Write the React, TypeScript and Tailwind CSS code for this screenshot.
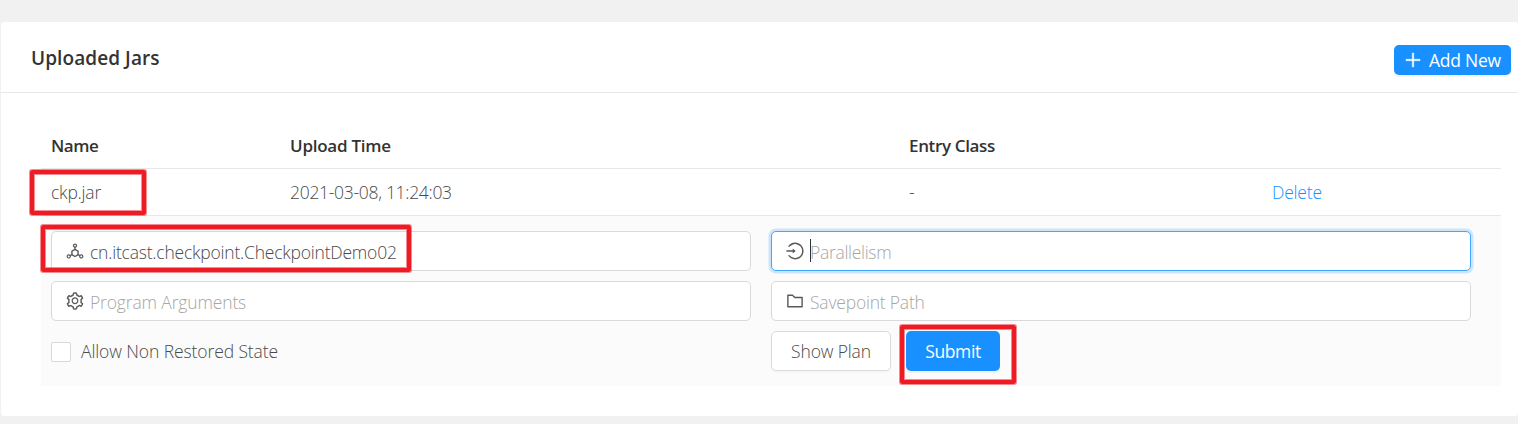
import type { ReactNode } from "react";
import {
  AiOutlineDeploymentUnit,
  AiOutlineFolder,
  AiOutlineLogin,
  AiOutlinePlus,
  AiOutlineSetting,
} from "react-icons/ai";

type FieldProps = {
  icon: ReactNode;
  children: ReactNode;
  filled?: boolean;
  focused?: boolean;
};

function Field({ icon, children, filled = false, focused = false }: FieldProps) {
  return (
    <div
      className={`flex h-10 items-center rounded-[5px] border bg-white pl-[13px] text-[17.5px] ${
        focused ? "border-[#40a9ff] shadow-[0_0_0_2.5px_rgba(24,144,255,0.2)]" : "border-[#d9d9d9]"
      }`}
    >
      <span className="mb-px w-[25px] text-[20px] text-[#595959]">{icon}</span>
      {focused && <span className="-mt-0.5 -mr-px h-[23px] w-px bg-[#333]" />}
      <span className={filled ? "mt-px text-[#4a4a4a]" : "mt-px text-[#a6a6a6]"}>{children}</span>
    </div>
  );
}

function Marker({ className }: { className: string }) {
  return (
    <div
      className={`absolute rounded-[2px] border-4 border-[#ed1c24] shadow-[0_0_0_1px_rgba(237,28,36,0.5),inset_0_0_0_1px_rgba(237,28,36,0.5)] ${className}`}
    />
  );
}

const columns = "grid grid-cols-[239px_619px_363px_239px] border-b border-[#e8e8e8] *:pl-2.5";

export default function App() {
  return (
    <div
      className="relative h-[424px] w-[1518px] overflow-hidden bg-[#f1f1f1] pt-[22px] pl-px text-[17.5px] leading-[26px] font-light text-[#4a4a4a]"
      style={{ fontFamily: '"Open Sans", "Noto Sans", sans-serif' }}
    >
      <main className="h-[394px] rounded-[3px] bg-white">
        <header className="flex h-[71px] items-center justify-between border-b border-[#e8e8e8] pr-[7px] pl-[30px]">
          <h1 className="mt-px text-[19px] font-semibold tracking-[0.08px] text-[#333]">Uploaded Jars</h1>
          <button className="mt-[5px] flex h-[30px] w-[117px] items-center rounded-[5px] bg-[#1890ff] pl-[9px] font-normal text-white shadow-[0_2px_0_rgba(0,0,0,0.045)]">
            <AiOutlinePlus className="mr-[6px] size-5 stroke-[20]" />
            <span className="whitespace-nowrap tracking-[-0.25px]">Add New</span>
          </button>
        </header>

        <section className="pt-[30px] pr-[17px] pl-10">
          <div className={`${columns} h-[46px] items-center text-[17px] font-semibold text-[#333]`}>
            <span className="tracking-[-0.5px]">Name</span>
            <span className="tracking-[-0.25px]">Upload Time</span>
            <span className="tracking-[-0.35px]">Entry Class</span>
          </div>
          <div className={`${columns} h-[47px] items-center`}>
            <span className="tracking-[-0.2px]">ckp.jar</span>
            <span className="tracking-[-0.3px]">2021-03-08, 11:24:03</span>
            <span>-</span>
            <a className="tracking-[-0.2px] text-[#1890ff]">Delete</a>
          </div>

          <div className="grid h-[170px] grid-cols-[700px_700px] content-start gap-x-5 gap-y-2.5 bg-[#fbfbfb] px-2.5 pt-[15px]">
            <Field icon={<AiOutlineDeploymentUnit />} filled>
              <span className="tracking-[-0.21px]">cn.itcast.checkpoint.CheckpointDemo02</span>
            </Field>
            <Field icon={<AiOutlineLogin />} focused>
              <span className="tracking-[-0.3px]">Parallelism</span>
            </Field>
            <Field icon={<AiOutlineSetting />}>
              <span className="tracking-[-0.15px]">Program Arguments</span>
            </Field>
            <Field icon={<AiOutlineFolder />}>
              <span className="tracking-[-0.2px]">Savepoint Path</span>
            </Field>
            <label className="flex h-10 items-center gap-2.5">
              <span className="mt-0.5 size-5 rounded-[2px] border border-[#d9d9d9] bg-white" />
              <span className="tracking-[-0.1px]">Allow Non Restored State</span>
            </label>
            <div className="flex gap-[15px]">
              <button className="h-10 w-[120px] rounded-[5px] border border-[#d9d9d9] bg-white tracking-[-0.15px] shadow-[0_2px_0_rgba(0,0,0,0.015)]">
                Show Plan
              </button>
              <button className="h-10 w-[94px] rounded-[5px] bg-[#1890ff] font-normal tracking-[-0.4px] text-white shadow-[0_2px_0_rgba(0,0,0,0.045)]">
                Submit
              </button>
            </div>
          </div>
        </section>
      </main>

      <Marker className="top-[170px] left-[30px] h-[45px] w-[116px]" />
      <Marker className="top-[225px] left-[41px] h-[47px] w-[370px]" />
      <Marker className="top-[325px] left-[900px] h-[59px] w-[116px]" />
    </div>
  );
}
